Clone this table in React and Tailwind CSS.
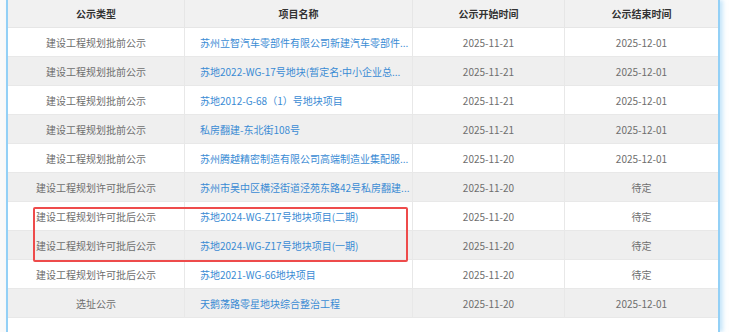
import React from "react";

const rows = [
  { type: "建设工程规划批前公示", name: "苏州立智汽车零部件有限公司新建汽车零部件...", start: "2025-11-21", end: "2025-12-01" },
  { type: "建设工程规划批前公示", name: "苏地2022-WG-17号地块(暂定名:中小企业总...", start: "2025-11-21", end: "2025-12-01" },
  { type: "建设工程规划批前公示", name: "苏地2012-G-68（1）号地块项目", start: "2025-11-21", end: "2025-12-01" },
  { type: "建设工程规划批前公示", name: "私房翻建-东北街108号", start: "2025-11-21", end: "2025-12-01" },
  { type: "建设工程规划批前公示", name: "苏州腾越精密制造有限公司高端制造业集配服...", start: "2025-11-20", end: "2025-12-01" },
  { type: "建设工程规划许可批后公示", name: "苏州市吴中区横泾街道泾苑东路42号私房翻建...", start: "2025-11-20", end: "待定" },
  { type: "建设工程规划许可批后公示", name: "苏地2024-WG-Z17号地块项目(二期)", start: "2025-11-20", end: "待定" },
  { type: "建设工程规划许可批后公示", name: "苏地2024-WG-Z17号地块项目(一期)", start: "2025-11-20", end: "待定" },
  { type: "建设工程规划许可批后公示", name: "苏地2021-WG-66地块项目", start: "2025-11-20", end: "待定" },
  { type: "选址公示", name: "天鹅荡路零星地块综合整治工程", start: "2025-11-20", end: "2025-12-01" },
];

const cols = "grid grid-cols-[177px_228px_152px_153px]";

export default function App() {
  return (
    <div
      className="w-[740px] h-[332px] bg-white overflow-hidden flex"
      style={{ fontFamily: '"Noto Sans CJK SC", "Noto Sans", sans-serif' }}
    >
      <div className="w-[6px] bg-[#fafafa]" />
      <div className="relative w-[714px] h-full border-x-2 border-[#93d0f6] shadow-[3px_0_4px_rgba(147,208,246,0.5)] text-[10px]">
        {/* header */}
        <div className={`${cols} h-[28px] bg-[#f1f1f1] text-[#333] font-bold border-b border-[#e6e6e6]`}>
          <div className="flex items-center justify-center border-r border-[#e6e6e6]">公示类型</div>
          <div className="flex items-center justify-center border-r border-[#e6e6e6]">项目名称</div>
          <div className="flex items-center justify-center border-r border-[#e6e6e6]">公示开始时间</div>
          <div className="flex items-center justify-center">公示结束时间</div>
        </div>

        {rows.map((r, i) => (
          <div
            key={i}
            className={`${cols} h-[29px] text-[#6e6e6e] border-b border-[#e8e8e8] ${i % 2 ? "bg-[#efefef]" : "bg-white"}`}
          >
            <div className="flex items-center justify-center border-r border-[#e8e8e8]">{r.type}</div>
            <div className="flex items-center pl-[15px] pr-[2px] border-r border-[#e8e8e8] min-w-0">
              <span className="whitespace-nowrap text-[#3a8bd4]">{r.name}</span>
            </div>
            <div className="flex items-center justify-center border-r border-[#e8e8e8]">{r.start}</div>
            <div className="flex items-center justify-center">{r.end}</div>
          </div>
        ))}

        {/* highlight box */}
        <div className="absolute left-[25px] top-[207px] w-[375px] h-[55px] border-2 border-[#ee4b4b] rounded-[2px] pointer-events-none" />
      </div>
    </div>
  );
}
